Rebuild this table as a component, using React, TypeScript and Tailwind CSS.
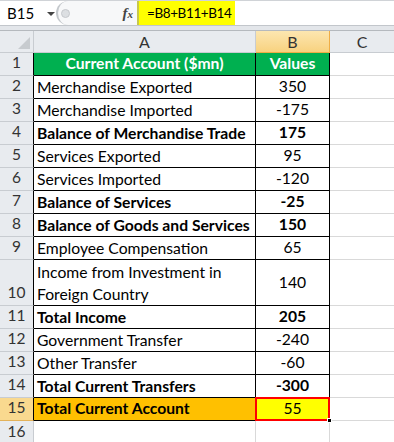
import React from 'react';

type Row = {
  n: number;
  label?: string[];
  value?: string;
  bold?: boolean;
  tall?: boolean;
};

const rows: Row[] = [
  { n: 2, label: ['Merchandise Exported'], value: '350' },
  { n: 3, label: ['Merchandise Imported'], value: '-175' },
  { n: 4, label: ['Balance of Merchandise Trade'], value: '175', bold: true },
  { n: 5, label: ['Services Exported'], value: '95' },
  { n: 6, label: ['Services Imported'], value: '-120' },
  { n: 7, label: ['Balance of Services'], value: '-25', bold: true },
  { n: 8, label: ['Balance of Goods and Services'], value: '150', bold: true },
  { n: 9, label: ['Employee Compensation'], value: '65' },
  { n: 10, label: ['Income from Investment in', 'Foreign Country'], value: '140', tall: true },
  { n: 11, label: ['Total Income'], value: '205', bold: true },
  { n: 12, label: ['Government Transfer'], value: '-240' },
  { n: 13, label: ['Other Transfer'], value: '-60' },
  { n: 14, label: ['Total Current Transfers'], value: '-300', bold: true },
];

const font = { fontFamily: 'Lato, "Open Sans", sans-serif' };

function RowHead({ n, active, tall }: { n: number | string; active?: boolean; tall?: boolean }) {
  return (
    <div
      className={`w-[34px] shrink-0 flex items-end justify-center pb-[1px] border-b border-r text-[15.5px] text-[#333] ${
        tall ? 'h-[46px]' : 'h-[23px]'
      } ${active ? 'bg-[#f9d98f] border-b-[#e3b25a]' : 'bg-[#e8ebef] border-b-[#c8ccd1]'} border-r-black`}
    >
      {n}
    </div>
  );
}

export default function App() {
  return (
    <div className="w-[394px] h-[442px] overflow-hidden bg-white text-black" style={font}>
      {/* Formula bar */}
      <div className="h-[26px] flex items-stretch bg-white border-t border-[#d0d3d7] border-b border-b-[#c2c6cb]">
        <div className="w-[56px] shrink-0 flex items-center pl-[7px] text-[15px]">
          B15
          <span className="ml-[13px] mt-[1px] w-0 h-0 border-l-[4px] border-r-[4px] border-t-[4px] border-l-transparent border-r-transparent border-t-[#444]" />
        </div>
        <div className="w-[81px] shrink-0 flex items-center rounded-l-[14px] border-l-2 border-[#c4c8cc] bg-[#f7f8f9] pl-[3px]">
          <span className="w-[9px] h-[9px] rounded-full bg-[#dcdfe2] border border-[#c6c9cd]" />
          <span
            className="ml-auto mr-[4px] text-[15px] italic font-bold text-[#444]"
            style={{ fontFamily: '"Liberation Serif", serif' }}
          >
            f<span className="text-[11px]">x</span>
          </span>
        </div>
        <div className="w-[98px] shrink-0 flex items-center bg-[#ffff00] border-l-2 border-[#c8c84a] pl-[8px] text-[13.5px] tracking-[-0.4px] whitespace-nowrap">
          =B8+B11+B14
        </div>
        <div className="flex-1" />
      </div>
      <div className="h-[4px] bg-[#e3e6ea]" />

      {/* Column headers */}
      <div className="flex h-[23px] text-[16px] text-[#333] border-t border-[#b5b9be]">
        <div className="w-[34px] shrink-0 relative bg-[#e8ebef] border-r border-b border-[#c8ccd1]">
          <div className="absolute right-[3px] bottom-[3px] w-0 h-0 border-l-[12px] border-t-[12px] border-l-transparent border-t-transparent border-r-0 border-b-[12px] border-b-[#c7cbcf] border-r-transparent" />
        </div>
        <div className="w-[222px] shrink-0 flex items-center justify-center bg-[#e8ebef] border-r border-b border-[#c8ccd1]">
          A
        </div>
        <div className="w-[74px] shrink-0 flex items-center justify-center bg-gradient-to-b from-[#fce6b0] to-[#f8d27f] border-r border-b border-[#f0ad45]">
          B
        </div>
        <div className="flex-1 flex items-center justify-center bg-[#e8ebef] border-b border-[#c8ccd1]">
          C
        </div>
      </div>

      {/* Row 1 header */}
      <div className="flex h-[23px]">
        <RowHead n={1} />
        <div className="w-[222px] shrink-0 flex items-center justify-center bg-[#00b050] text-white font-bold text-[15.7px] border-r border-b border-black">
          Current Account ($mn)
        </div>
        <div className="w-[74px] shrink-0 flex items-center justify-center bg-[#00b050] text-white font-bold text-[15.7px] border-r border-b border-black">
          Values
        </div>
        <div className="flex-1 border-b border-[#d9d9d9]" />
      </div>

      {rows.map(r => (
        <div key={r.n} className={`flex ${r.tall ? 'h-[46px]' : 'h-[23px]'}`}>
          <RowHead n={r.n} tall={r.tall} />
          <div
            className={`w-[222px] shrink-0 flex flex-col justify-end pl-[3px] text-[15.7px] border-r border-b border-black ${
              r.bold ? 'font-bold' : ''
            }`}
          >
            {r.label?.map(l => (
              <div key={l} className="h-[22px] leading-[22px] whitespace-nowrap">
                {l}
              </div>
            ))}
          </div>
          <div
            className={`w-[74px] shrink-0 flex items-center justify-center text-[15.7px] border-r border-b border-black ${
              r.bold ? 'font-bold' : ''
            }`}
          >
            {r.value}
          </div>
          <div className="flex-1 border-b border-[#d9d9d9]" />
        </div>
      ))}

      {/* Row 15 */}
      <div className="flex h-[23px]">
        <RowHead n={15} active />
        <div className="w-[222px] shrink-0 flex items-center pl-[3px] bg-[#ffc000] font-bold text-[15.7px] border-r border-b border-black">
          Total Current Account
        </div>
        <div className="w-[74px] shrink-0 relative flex items-center justify-center bg-[#ffff00] text-[15.7px] border-r border-b border-black">
          55
          <div className="absolute -left-[1px] -top-[1px] -right-[1px] -bottom-[1px] border-2 border-[#ff0000]" />
          <div className="absolute -right-[3px] -bottom-[3px] w-[5px] h-[5px] bg-black border border-white" />
        </div>
        <div className="flex-1 border-b border-[#d9d9d9]" />
      </div>

      {/* Row 16 */}
      <div className="flex h-[23px]">
        <div className="w-[34px] shrink-0 flex items-end justify-center pb-[1px] bg-[#e8ebef] border-r border-[#c8ccd1] text-[15.5px] text-[#333]">
          16
        </div>
        <div className="w-[222px] shrink-0 border-r border-[#d9d9d9]" />
        <div className="w-[74px] shrink-0 border-r border-[#d9d9d9]" />
        <div className="flex-1" />
      </div>
    </div>
  );
}
